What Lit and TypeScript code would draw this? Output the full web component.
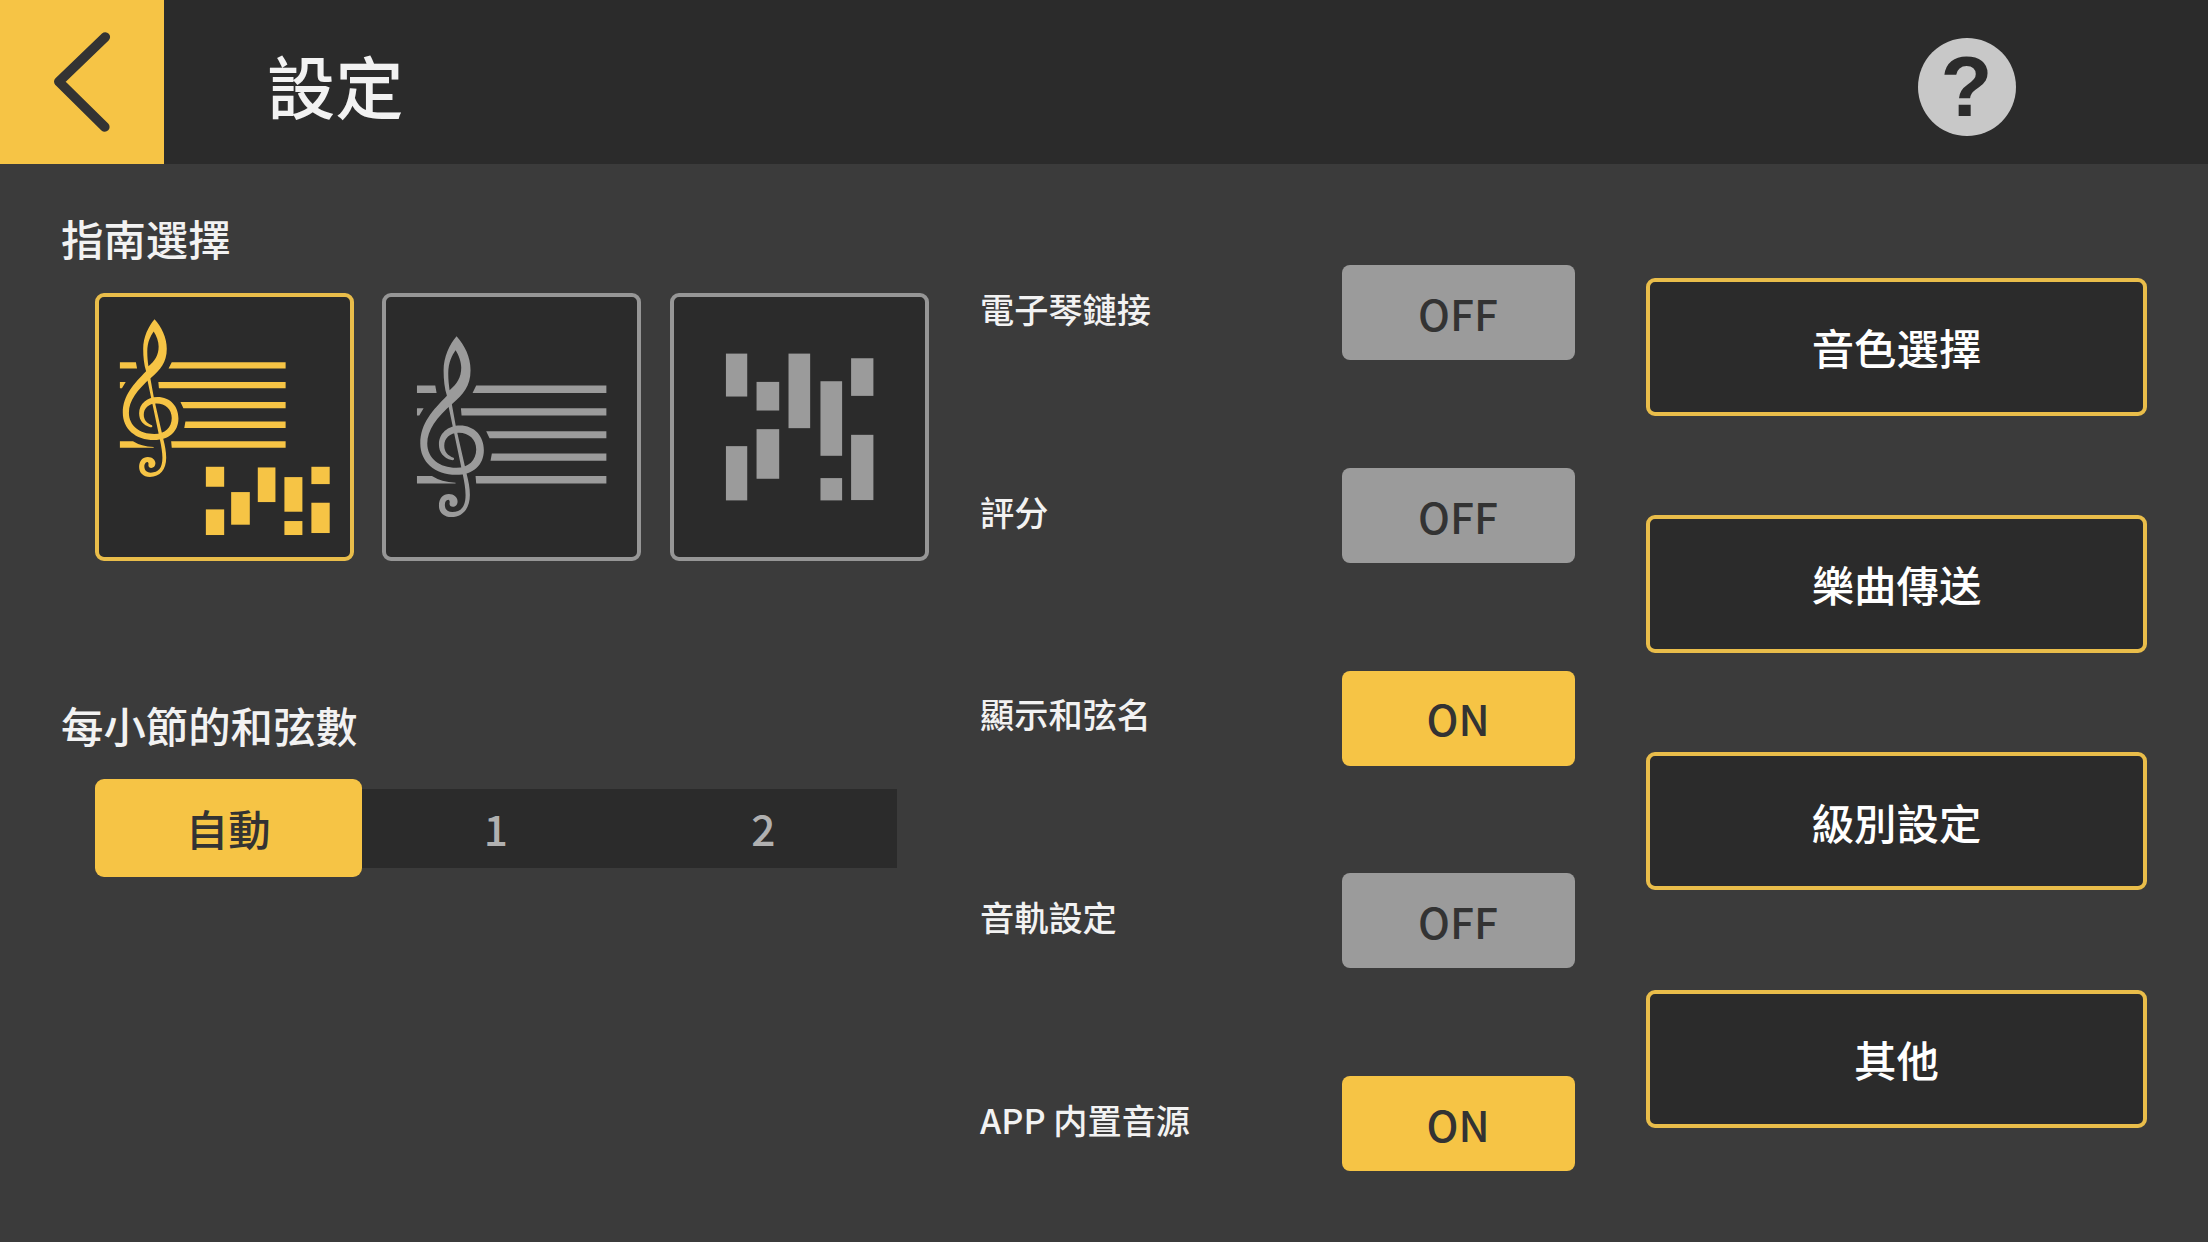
import { LitElement, html, css, svg } from 'lit';
import { customElement, property, state } from 'lit/decorators.js';
import { classMap } from 'lit/directives/class-map.js';

type GuideKind = 'both' | 'score' | 'roll';
type Bar = [x: number, y: number, width: number, height: number];

interface Setting {
  label: string;
  on: boolean;
}

const SMALL_BARS: Bar[] = [
  [377, 560, 55, 60],
  [377, 688, 55, 77],
  [453, 636, 56, 98],
  [533, 562, 53, 104],
  [613, 591, 54, 104],
  [613, 723, 54, 42],
  [694, 560, 55, 52],
  [694, 668, 55, 91],
];

const LARGE_BARS: Bar[] = [
  [227, 220, 64, 129],
  [227, 498, 64, 163],
  [319, 305, 68, 86],
  [319, 447, 68, 149],
  [415, 220, 65, 224],
  [511, 303, 65, 224],
  [511, 594, 65, 67],
  [603, 234, 67, 113],
  [603, 464, 67, 196],
];

const bars = (list: Bar[]) =>
  list.map(([x, y, w, h]) => svg`<rect x=${x} y=${y} width=${w} height=${h} />`);

// Treble clef over five staff lines, the lines are cut around the clef
const staff = svg`
  <path
    fill-rule="evenodd"
    d="M261 168C285 195 303 230 303 270C303 318 280 343 250 369C200 412 173 450 173 490C173 535 210 563 260 563C297 563 320 540 320 508C320 478 298 458 268 458C240 458 224 475 224 497C224 515 235 527 252 533C256 537 252 541 246 540C222 533 208 517 208 492C208 460 235 436 271 436C315 436 343 468 343 510C343 555 310 584 260 584C195 584 152 545 152 490C152 430 190 390 232 347C225 325 222 300 222 270C222 230 240 192 261 168ZM258 210C248 225 236 245 236 280C236 300 238 315 240 330C262 312 275 292 275 262C275 245 268 225 258 210Z"
  />
  <path
    d="M235 370L246 368L259 440L291 580C297 605 301 622 301 645C301 685 280 711 245 711C222 711 208 697 208 677C208 655 220 642 238 642C253 642 264 652 264 664C264 674 257 680 250 680C243 680 239 675 240 669C241 664 240 659 236 659C229 660 225 667 226 677C227 690 236 696 248 696C275 696 288 680 288 645C288 625 284 605 280 585Z"
  />
  <path
    d="M142 316H197L201 338H142ZM320 316H711V338H309ZM142 384H162L149 406H142ZM274 384H711V406H276ZM350 453H711V474H360ZM367 520H711V542H363ZM142 588H187Q215 606 258 608V610H142ZM318 588H711V610H320Z"
  />
`;

@customElement('guide-card')
export class GuideCard extends LitElement {
  static styles = css`
    :host {
      display: block;
    }

    .card {
      box-sizing: border-box;
      width: 100%;
      height: 100%;
      border: 4px solid #969696;
      border-radius: 9px;
      background: #2b2b2b;
      color: #9b9b9b;
      overflow: hidden;
    }

    .card.selected {
      border-color: #e9bd4a;
      color: #f6c445;
    }

    .icon {
      display: block;
      width: 100%;
      height: 100%;
      fill: currentColor;
    }
  `;

  @property()
  kind: GuideKind = 'both';

  @property({ type: Boolean })
  selected = false;

  private renderIcon() {
    switch (this.kind) {
      case 'both':
        return html`
          <svg class="icon" viewBox="56 51 754 779">
            <g transform="translate(-5.5 -30) scale(0.875 0.873)">${staff}</g>
            ${bars(SMALL_BARS)}
          </svg>
        `;
      case 'score':
        return html`<svg class="icon" viewBox="49 51 754 779">${staff}</svg>`;
      default:
        return html`<svg class="icon" viewBox="71 51 754 779">${bars(LARGE_BARS)}</svg>`;
    }
  }

  render() {
    return html`
      <div class=${classMap({ card: true, selected: this.selected })}>${this.renderIcon()}</div>
    `;
  }
}

@customElement('toggle-button')
export class ToggleButton extends LitElement {
  static styles = css`
    :host {
      display: block;
    }

    .toggle {
      display: flex;
      align-items: center;
      justify-content: center;
      box-sizing: border-box;
      width: 233px;
      height: 95px;
      padding: 1px 1px 0 0;
      border-radius: 8px;
      background: #9b9b9b;
      color: #333;
      font-size: 42.4px;
      line-height: 1;
    }

    .toggle.on {
      background: #f6c445;
    }
  `;

  @property({ type: Boolean })
  on = false;

  render() {
    return html`
      <div class=${classMap({ toggle: true, on: this.on })}>${this.on ? 'ON' : 'OFF'}</div>
    `;
  }
}

@customElement('app-root')
export class AppRoot extends LitElement {
  static styles = css`
    :host {
      display: flex;
      flex-direction: column;
      width: 2208px;
      height: 1242px;
      overflow: hidden;
      background: #3b3b3b;
      color: #f2f2f2;
      font-family: 'Noto Sans CJK SC', 'Noto Sans CJK TC', sans-serif;
      font-weight: 500;
    }

    .header {
      display: flex;
      align-items: center;
      flex: none;
      height: 164px;
      background: #2b2b2b;
    }

    .back {
      width: 164px;
      height: 164px;
      background: #f6c445;
    }

    .back-icon {
      display: block;
      fill: none;
      stroke: #333;
      stroke-width: 9.6;
      stroke-linecap: round;
      stroke-linejoin: round;
    }

    .title {
      flex: 1;
      margin: 0;
      padding: 7px 0 0 103px;
      font-size: 68.3px;
      font-weight: 500;
      line-height: 1;
    }

    .help {
      display: flex;
      align-items: center;
      justify-content: center;
      box-sizing: border-box;
      width: 98px;
      height: 98px;
      margin: 9px 192.5px 0 0;
      border-radius: 50%;
      background: #c8c8c8;
      color: #2b2b2b;
      font: bold 85px/1 'Liberation Sans', sans-serif;
    }

    .content {
      display: grid;
      grid-template-columns: 919px 595px 501px;
      flex: 1;
      padding-left: 61px;
      align-items: start;
    }

    .section-title {
      margin: 0;
      font-size: 42.4px;
      font-weight: 500;
      line-height: 48px;
    }

    .left {
      padding-top: 50px;
    }

    .guides {
      display: grid;
      grid-template-columns: repeat(3, 259px);
      gap: 28.5px;
      height: 268px;
      margin: 31px 0 140px 33.7px;
    }

    .segments {
      display: grid;
      grid-template-columns: repeat(3, 267.5px);
      align-items: center;
      margin: 30px 0 0 33.5px;
    }

    .segment {
      display: flex;
      align-items: center;
      justify-content: center;
      box-sizing: border-box;
      height: 79px;
      padding-top: 1px;
      background: #2b2b2b;
      color: #b0b0b0;
      font-size: 42.4px;
      line-height: 1;
    }

    .segment.active {
      height: 98px;
      border-radius: 9px;
      background: #f6c445;
      color: #333;
    }

    .settings {
      display: flex;
      flex-direction: column;
      gap: 107.8px;
      padding-top: 101px;
    }

    .setting {
      display: flex;
      align-items: center;
      justify-content: space-between;
      height: 95px;
      font-size: 34.2px;
      line-height: 1;
    }

    .setting-label {
      padding-bottom: 9px;
    }

    .menu {
      display: flex;
      flex-direction: column;
      gap: 99.2px;
      margin-left: 71px;
      padding-top: 114px;
      width: 501px;
    }

    .menu-item {
      display: flex;
      align-items: center;
      justify-content: center;
      box-sizing: border-box;
      height: 138px;
      padding-top: 1px;
      border: 4px solid #e9bd4a;
      border-radius: 9px;
      background: #2b2b2b;
      color: #fff;
      font-size: 42.4px;
      line-height: 1;
    }
  `;

  @state()
  private guide: GuideKind = 'both';

  @state()
  private chordCount = '自動';

  @state()
  private settings: Setting[] = [
    { label: '電子琴鏈接', on: false },
    { label: '評分', on: false },
    { label: '顯示和弦名', on: true },
    { label: '音軌設定', on: false },
    { label: 'APP 内置音源', on: true },
  ];

  private toggle(index: number) {
    this.settings = this.settings.map((item, i) => (i === index ? { ...item, on: !item.on } : item));
  }

  private renderHeader() {
    return html`
      <header class="header">
        <div class="back">
          <svg class="back-icon" width="164" height="164" viewBox="0 0 164 164">
            <path d="M105.3 37L58.8 81.7L104.8 127" />
          </svg>
        </div>
        <h1 class="title">設定</h1>
        <div class="help">?</div>
      </header>
    `;
  }

  render() {
    const guides: GuideKind[] = ['both', 'score', 'roll'];
    return html`
      ${this.renderHeader()}
      <main class="content">
        <section class="left">
          <h2 class="section-title">指南選擇</h2>
          <div class="guides">
            ${guides.map(
              (kind) => html`
                <guide-card
                  .kind=${kind}
                  ?selected=${kind === this.guide}
                  @click=${() => (this.guide = kind)}
                ></guide-card>
              `
            )}
          </div>
          <h2 class="section-title">每小節的和弦數</h2>
          <div class="segments">
            ${['自動', '1', '2'].map(
              (value) => html`
                <div
                  class=${classMap({ segment: true, active: value === this.chordCount })}
                  @click=${() => (this.chordCount = value)}
                >
                  ${value}
                </div>
              `
            )}
          </div>
        </section>
        <section class="settings">
          ${this.settings.map(
            (item, i) => html`
              <div class="setting">
                <span class="setting-label">${item.label}</span>
                <toggle-button ?on=${item.on} @click=${() => this.toggle(i)}></toggle-button>
              </div>
            `
          )}
        </section>
        <nav class="menu">
          ${['音色選擇', '樂曲傳送', '級別設定', '其他'].map(
            (name) => html`<div class="menu-item">${name}</div>`
          )}
        </nav>
      </main>
    `;
  }
}

declare global {
  interface HTMLElementTagNameMap {
    'app-root': AppRoot;
    'guide-card': GuideCard;
    'toggle-button': ToggleButton;
  }
}
